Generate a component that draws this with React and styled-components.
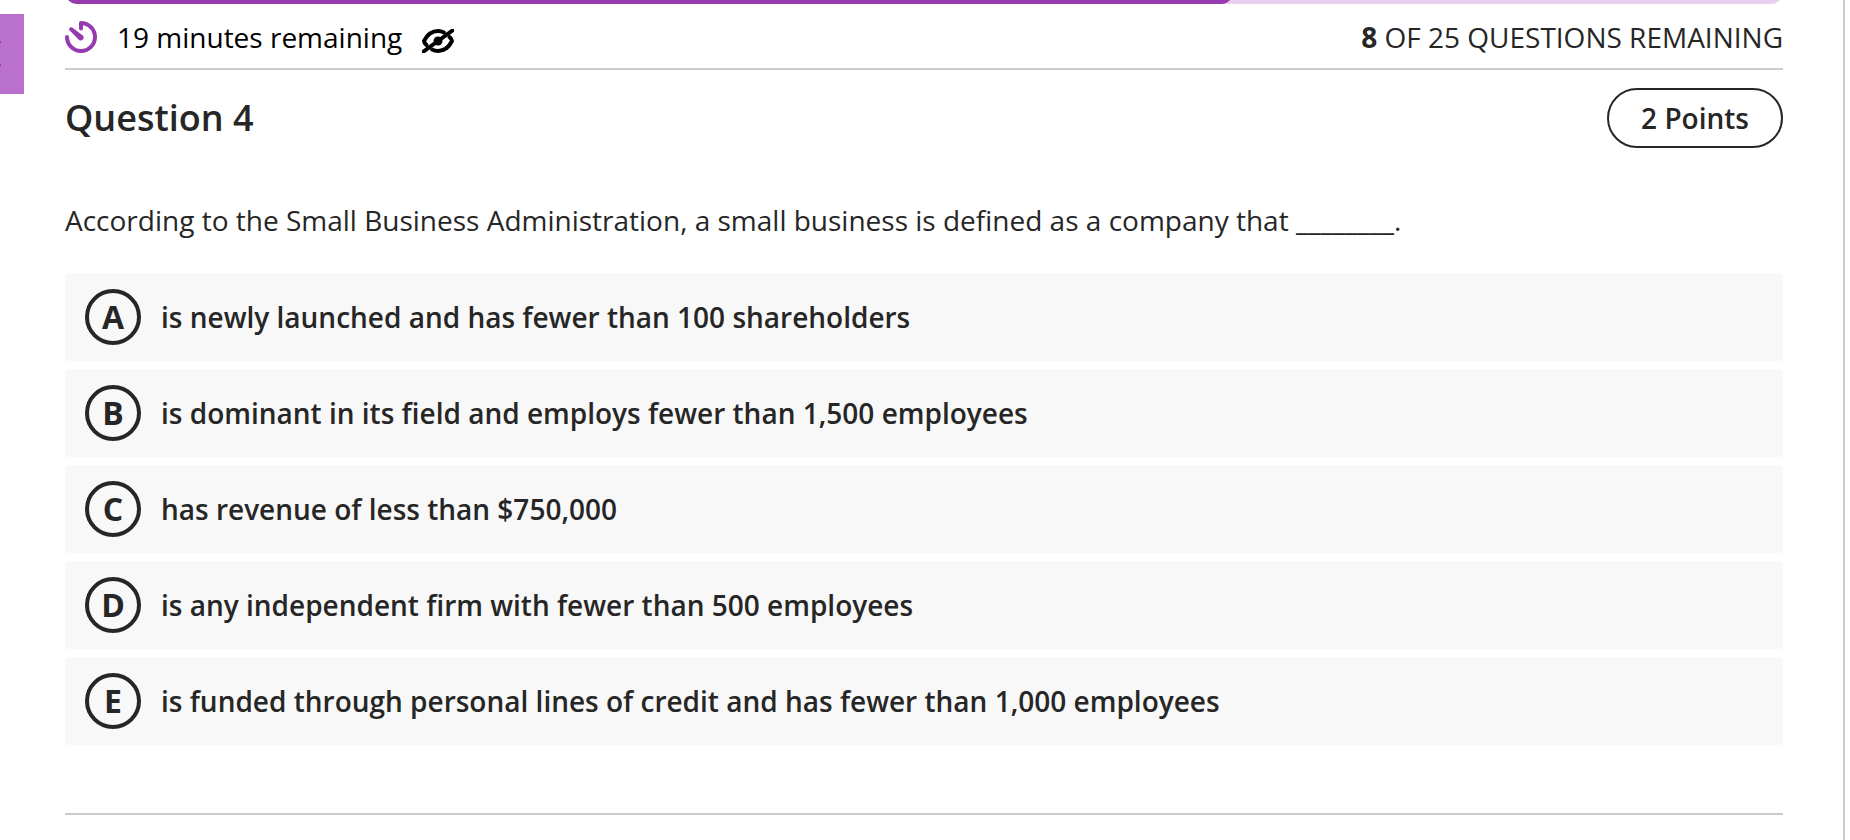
import React, { useState } from "react";
import styled, { createGlobalStyle } from "styled-components";

const theme = {
  purple: "#963aaf",
  purpleMid: "#b971cd",
  purpleLight: "#e8cfef",
  text: "#262626",
  line: "#cccccc",
  rowGray: "#f8f8f8",
};

const GlobalStyle = createGlobalStyle`
  * {
    box-sizing: border-box;
  }
  body {
    margin: 0;
    background-color: #ffffff;
    color: ${theme.text};
    font-family: "Open Sans", "Noto Sans", sans-serif;
    font-size: 28px;
    line-height: 40px;
  }
`;

const Page = styled.div`
  min-height: 100vh;
  margin-right: 5px;
  padding: 0 60px 0 65px;
  border-right: 2px solid ${theme.line};
`;

const SideTab = styled.button`
  position: absolute;
  top: 14px;
  left: 0;
  width: 24px;
  height: 80px;
  padding: 0;
  border: 0;
  background-color: ${theme.purpleMid};
  cursor: pointer;
`;

const TabIcon = styled.svg`
  display: block;
`;

/* only the bottom edge of the bar shows under the top of the window */
const TrackWindow = styled.div`
  display: flex;
  align-items: flex-end;
  height: 4px;
  overflow: hidden;
`;

const Track = styled.div`
  flex: 1;
  height: 24px;
  overflow: hidden;
  border-radius: 12px;
  background-color: ${theme.purpleLight};
`;

const Fill = styled.div`
  width: ${(props) => props.$percent}%;
  height: 100%;
  border-radius: 12px;
  background-color: ${theme.purple};
`;

const StatusBar = styled.header`
  display: flex;
  justify-content: space-between;
  align-items: center;
  height: 66px;
  padding-top: 2px;
  border-bottom: 2px solid ${theme.line};
`;

const Timer = styled.div`
  display: flex;
  align-items: center;
  color: #000000;
`;

const TimerText = styled.span`
  margin: 0 20px;
`;

const HideButton = styled.button`
  display: flex;
  padding: 8px 0 0;
  border: 0;
  background: none;
  color: inherit;
  cursor: pointer;
`;

const QuestionHeader = styled.div`
  display: flex;
  justify-content: space-between;
  align-items: center;
  margin-top: 18px;
`;

const Title = styled.h1`
  margin: 0;
  font-size: 36px;
  font-weight: 600;
`;

const Points = styled.div`
  padding: 8px 32px;
  border: 2px solid ${theme.text};
  border-radius: 30px;
  font-weight: 600;
`;

const Choices = styled.fieldset`
  display: grid;
  gap: 8px;
  min-width: 0;
  margin: 0;
  padding: 0 0 68px;
  border: 0;
  border-bottom: 2px solid ${theme.line};
`;

const Prompt = styled.legend`
  padding: 52px 0 33px;
`;

const Choice = styled.label`
  display: flex;
  align-items: center;
  gap: 20px;
  min-height: 88px;
  padding: 16px 20px;
  border-radius: 4px;
  background-color: ${theme.rowGray};
  font-weight: 600;
  cursor: pointer;
`;

const Bubble = styled.span`
  display: grid;
  place-items: center;
  flex: none;
  width: 56px;
  height: 56px;

  > * {
    grid-area: 1 / 1;
  }
`;

const Radio = styled.input`
  appearance: none;
  width: 56px;
  height: 56px;
  margin: 0;
  border: 4px solid ${theme.text};
  border-radius: 50%;

  &:checked {
    border-color: ${theme.purple};
  }
`;

const Letter = styled.span`
  font-size: 32px;
  font-weight: 700;
`;

const choices = [
  { letter: "A", text: "is newly launched and has fewer than 100 shareholders" },
  { letter: "B", text: "is dominant in its field and employs fewer than 1,500 employees" },
  { letter: "C", text: "has revenue of less than $750,000" },
  { letter: "D", text: "is any independent firm with fewer than 500 employees" },
  { letter: "E", text: "is funded through personal lines of credit and has fewer than 1,000 employees" },
];

const total = 25;
const remaining = 8;

function TimerIcon() {
  return (
    <svg width="32" height="32" viewBox="0 0 32 32" aria-hidden="true">
      <path
        d="M16 7.5V2A14 14 0 1 1 2 16"
        fill="none"
        stroke={theme.purple}
        strokeWidth="4"
        strokeLinecap="round"
        strokeLinejoin="round"
      />
      <path
        d="M4.5 9.2C3.2 7.5 5.2 5.4 7.2 6.6L17.8 14.6C20.2 17.2 17 21 14 19Z"
        fill={theme.purple}
      />
    </svg>
  );
}

function HiddenEyeIcon() {
  return (
    <svg width="32" height="24" viewBox="0 0 32 24" aria-hidden="true">
      <g fill="none" stroke="currentColor" strokeWidth="4" strokeLinecap="round">
        <path d="M4.5 16Q2 13.5 2 12C5 6 10 2 16 2Q19 2 22 3.5" />
        <path d="M27.5 8Q30 10.5 30 12C27 18 22 22 16 22Q13 22 10 20.5" />
        <path d="M1.5 22.5L30.5 1.5" />
      </g>
      <circle cx="16" cy="12" r="4.5" fill="currentColor" />
    </svg>
  );
}

export default function App() {
  const [answer, setAnswer] = useState("");

  return (
    <>
      <GlobalStyle />
      <SideTab aria-label="Open panel">
        <TabIcon width="24" height="80" viewBox="0 0 24 80" aria-hidden="true">
          <path d="M0 27h1v2H0zM0 50h1v2H0z" fill={theme.purple} />
        </TabIcon>
      </SideTab>
      <Page>
        <TrackWindow>
          <Track>
            <Fill $percent={((total - remaining) / total) * 100} />
          </Track>
        </TrackWindow>
        <StatusBar>
          <Timer>
            <TimerIcon />
            <TimerText>19 minutes remaining</TimerText>
            <HideButton aria-label="Hide time remaining">
              <HiddenEyeIcon />
            </HideButton>
          </Timer>
          <div>
            <b>{remaining}</b> OF {total} QUESTIONS REMAINING
          </div>
        </StatusBar>

        <QuestionHeader>
          <Title>Question 4</Title>
          <Points>2 Points</Points>
        </QuestionHeader>

        <Choices>
          <Prompt>
            According to the Small Business Administration, a small business is
            defined as a company that ________.
          </Prompt>
          {choices.map((choice) => (
            <Choice key={choice.letter}>
              <Bubble>
                <Radio
                  type="radio"
                  name="answer"
                  value={choice.letter}
                  checked={answer === choice.letter}
                  onChange={(ev) => setAnswer(ev.target.value)}
                />
                <Letter>{choice.letter}</Letter>
              </Bubble>
              {choice.text}
            </Choice>
          ))}
        </Choices>
      </Page>
    </>
  );
}
